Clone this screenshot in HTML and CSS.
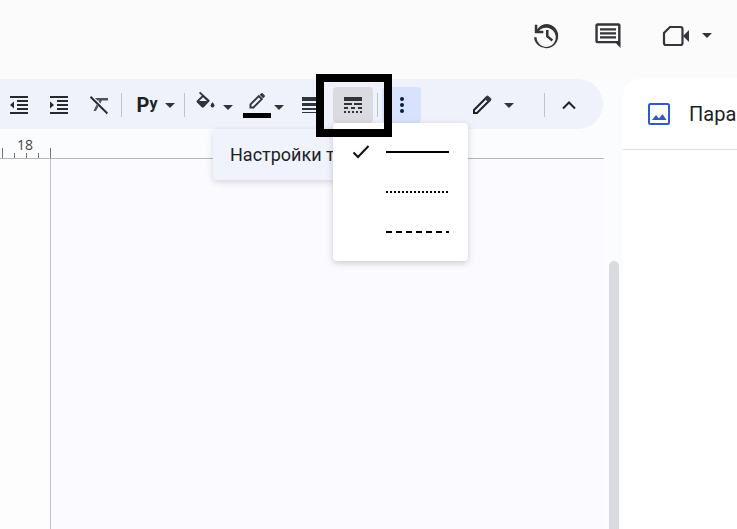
FILE: index.html
```html
<!DOCTYPE html>
<html lang="ru">
<head>
  <meta charset="UTF-8">
  <meta name="viewport" content="width=device-width, initial-scale=1">
  <title>Презентация</title>
  <link rel="stylesheet" href="styles.css">
</head>
<body>
  <header class="header">
    <button class="header-btn" aria-label="История изменений">
      <svg width="32" height="32" viewBox="0 0 24 24" fill="#333538"><path d="M13 3a9 9 0 0 0-7.500 4V3.500H3.600V10H10V8.100H6.800A7.200 7.200 0 1 1 4.900 13H3a9.100 9.100 0 1 0 10-10zM12 7.500v5l4.200 3.600 1.100-1.500-3.400-2.800V7.500z"/></svg>
    </button>
    <button class="header-btn" aria-label="Комментарии">
      <svg width="32" height="32" viewBox="0 0 24 24" fill="#333538"><path d="M21.400 4c0-1-.8-1.500-1.600-1.500H4.200c-1 0-1.700.7-1.700 1.700v11.600c0 1 .7 1.700 1.700 1.700H18l3.400 3.500zM19.600 15.800H4.300V4.300h15.300zM6 12.200h12v1.700H6zM6 9.200h12v1.700H6zM6 6.200h12v1.700H6z"/></svg>
    </button>
    <button class="header-btn meet" aria-label="Видеовстреча">
      <svg width="28" height="24" viewBox="0 0 28 24" fill="none" stroke="#333538" stroke-width="2.200"><path d="M8 3h10.500q2 0 2 2v14q0 2-2 2H4q-2 0-2-2V9z"/><path d="M21 12l6-6v12z" fill="#333538" stroke="none"/></svg>
      <span class="caret"></span>
    </button>
  </header>

  <div class="main">
    <main class="editor">
      <div class="toolbar" role="toolbar">
        <button class="tool" aria-label="Уменьшить отступ">
          <svg width="20" height="20" viewBox="0 0 20 20" fill="#26292d"><path d="M1 1h18v2H1zM8 5h11v2H8zM8 9h11v2H8zM8 13h11v2H8zM1 17h18v2H1zM5 6.500v7L1 10z"/></svg>
        </button>
        <button class="tool" aria-label="Увеличить отступ">
          <svg width="20" height="20" viewBox="0 0 20 20" fill="#26292d"><path d="M1 1h18v2H1zM8 5h11v2H8zM8 9h11v2H8zM8 13h11v2H8zM1 17h18v2H1zM1 6.500v7l4-3.500z"/></svg>
        </button>
        <button class="tool" aria-label="Очистить форматирование">
          <svg width="20" height="20" viewBox="0 0 20 20" fill="#26292d"><path d="M6 3h13v2.400h-6.200l-1.400 3-1.700-1.700.6-1.300H8.400zM7.600 9.600l1.800 1.800L7 16H4.500z" fill="#505357"/><path d="M2.200 1L19 17.800 17.700 19.200.8 2.400z"/></svg>
        </button>
        <span class="separator"></span>
        <button class="tool wide" aria-label="Языковые инструменты">
          <span class="py">P<small>y</small></span>
          <span class="caret"></span>
        </button>
        <span class="separator"></span>
        <button class="tool color" aria-label="Цвет заливки">
          <svg width="22" height="20" viewBox="0 0 22 20" fill="#303338"><path d="M5.200.7L4 2l2.800 2.800L2 9.600c-.6.600-.6 1.300 0 1.900l4.800 4.700c.6.600 1.400.6 2 0l5.500-5.600c.5-.5.5-1.100 0-1.600zM8 6.200l4 3.800H4.200z"/><path d="M17.500 11.300c-1.300 1.600-1.900 2.500-1.900 3.200a1.900 1.900 0 0 0 3.900 0c0-.7-.7-1.600-2-3.200z"/></svg>
          <span class="caret low"></span>
        </button>
        <button class="tool color border-color" aria-label="Цвет рамки">
          <span class="swatch">
            <svg width="18" height="18" viewBox="0 0 18 18" fill="none" stroke="#34373c" stroke-width="2"><path d="M2.500 12.400l8.300-8.300 3 3-8.300 8.300h-3z"/><path d="M11.700 2.700l1.500-1.500q.7-.5 1.400.1l2 2q.6.700.1 1.400l-1.500 1.500z" fill="#34373c" stroke="none"/></svg>
          </span>
          <span class="caret low"></span>
        </button>
        <button class="tool" aria-label="Толщина рамки">
          <svg width="20" height="18" viewBox="0 0 20 18" fill="#303338"><path d="M1 1h18v4H1zM1 7h18v3H1zM1 12h18v2H1zM1 16h18v1H1z"/></svg>
        </button>
        <div class="dash">
          <button class="tool pressed" aria-label="Тип линии" aria-expanded="true">
            <svg width="20" height="18" viewBox="0 0 20 18" fill="#303338"><path d="M1 1h18v4H1zM1 7h8v2H1zM11 7h8v2h-8zM1 11h4v2H1zM8 11h4v2H8zM15 11h4v2h-4zM1 15h2v2H1zM5 15h2v2H5zM9 15h2v2H9zM13 15h2v2h-2zM17 15h2v2h-2z"/></svg>
          </button>
          <div class="tooltip">Настройки т</div>
          <div class="menu" role="menu">
            <button class="menu-item" role="menuitemradio" aria-checked="true" aria-label="Сплошная">
              <svg class="check" width="18" height="16" viewBox="0 0 18 16" fill="none" stroke="#111" stroke-width="2"><path d="M1.500 8.500l4.500 4.500L16.500 2"/></svg>
              <span class="line solid"></span>
            </button>
            <button class="menu-item" role="menuitemradio" aria-checked="false" aria-label="Точки">
              <span class="line dotted"></span>
            </button>
            <button class="menu-item" role="menuitemradio" aria-checked="false" aria-label="Пунктир">
              <span class="line dashed"></span>
            </button>
          </div>
          <div class="highlight"></div>
        </div>
        <span class="separator"></span>
        <button class="tool more" aria-label="Ещё">
          <svg width="6" height="18" viewBox="0 0 6 18" fill="#0c1b3d"><circle cx="3" cy="3" r="2"/><circle cx="3" cy="9" r="2"/><circle cx="3" cy="15" r="2"/></svg>
        </button>
        <div class="toolbar-end">
          <button class="tool mode" aria-label="Режим редактирования">
            <svg width="20" height="20" viewBox="0 0 20 20" fill="none" stroke="#1f2226" stroke-width="2"><path d="M2 15L14 3l3 3L5 18H2z"/><path d="M12.300 3.300l2.500-2.500q.8-.6 1.600.1l2.700 2.700q.6.800 0 1.600l-2.500 2.500z" fill="#34373c" stroke="none"/></svg>
            <span class="caret"></span>
          </button>
          <span class="separator"></span>
          <button class="tool" aria-label="Скрыть меню">
            <svg width="14" height="10" viewBox="0 0 14 10" fill="none" stroke="#202328" stroke-width="2"><path d="M1 8.500l6-6 6 6"/></svg>
          </button>
        </div>
      </div>

      <div class="workspace">
        <div class="canvas">
          <div class="ruler">
            <span class="tick long"></span>
            <span class="tick"></span>
            <span class="tick"><span class="tick-label">18</span></span>
            <span class="tick"></span>
            <span class="tick long"></span>
          </div>
          <div class="slide-area">
            <div class="slide"></div>
          </div>
        </div>
        <div class="scrollbar"></div>
      </div>
    </main>

    <aside class="sidebar">
      <div class="sidebar-header">
        <svg width="24" height="24" viewBox="0 0 24 24" fill="none" stroke="#3159c7" stroke-width="2"><rect x="2" y="2" width="20" height="20" rx="1.500"/><path d="M5 18l4-5 3 3.500L15.500 12l4 6z" fill="#3159c7" stroke="none"/></svg>
        <h2 class="sidebar-title">Пара</h2>
      </div>
    </aside>
  </div>
</body>
</html>
```
FILE: styles.css
```css
* {
  box-sizing: border-box;
}

body {
  margin: 0;
  height: 100vh;
  display: flex;
  flex-direction: column;
  overflow: hidden;
  font-family: Roboto, Arial, sans-serif;
  background-color: #fbfbfb;
  color: #202124;
}

button {
  padding: 0;
  border: none;
  background: none;
  font: inherit;
  color: inherit;
  cursor: pointer;
}

svg {
  display: block;
  flex-shrink: 0;
}

/* Header */
.header {
  display: flex;
  justify-content: flex-end;
  align-items: center;
  gap: 30px;
  height: 79px;
  padding: 0 25px 8px 0;
}

.header-btn {
  display: flex;
  align-items: center;
}

.meet {
  gap: 12px;
  margin-left: 8px;
}

.caret {
  flex-shrink: 0;
  border: 5px solid transparent;
  border-top-color: #333538;
  border-bottom: none;
}

.main {
  flex: 1;
  display: flex;
  min-height: 0;
}

.editor {
  flex: 1;
  min-width: 0;
  display: flex;
  flex-direction: column;
  background-color: #fbfcfe;
}

/* Toolbar */
.toolbar {
  display: flex;
  align-items: center;
  gap: 4px;
  height: 50px;
  margin-right: 20px;
  padding: 2px 16px 0 1px;
  border-radius: 0 25px 25px 0;
  background-color: #eff2fa;
}

.tool {
  display: flex;
  justify-content: center;
  align-items: center;
  flex-shrink: 0;
  width: 36px;
  height: 36px;
  border-radius: 4px;
}

.separator {
  flex-shrink: 0;
  width: 1px;
  height: 24px;
  background-color: #c0c4cc;
}

.wide {
  width: 54px;
  gap: 8px;
  padding-left: 6px;
}

.py {
  font-size: 20px;
  line-height: 24px;
  font-weight: 700;
}

.py small {
  font-size: 16px;
  line-height: 16px;
  vertical-align: 3px;
}

.color {
  width: 48px;
  gap: 6px;
  padding-left: 2px;
}

.color svg {
  margin-bottom: 8px;
}

.low {
  margin-top: 4px;
}

.border-color {
  gap: 3px;
  padding: 0 3px 0 0;
}

.swatch {
  display: flex;
  justify-content: center;
  width: 28px;
  border-bottom: 5px solid #000;
}

.swatch svg {
  margin-bottom: 3px;
}

.pressed {
  width: 40px;
  background-color: #dadbe0;
}

.more {
  width: 39px;
  background-color: #d8e2fc;
}

.toolbar-end {
  display: flex;
  align-items: center;
  gap: 6px;
  margin-left: auto;
}

.mode {
  width: 54px;
  gap: 12px;
  margin-right: 18px;
}

/* Line type menu */
.dash {
  position: relative;
}

.tooltip {
  position: absolute;
  top: 42px;
  right: 0;
  width: 160px;
  height: 51px;
  padding-left: 17px;
  border-radius: 4px;
  background-color: #f0f3fb;
  box-shadow: 0 2px 6px rgba(60, 64, 67, 0.2);
  font-size: 18px;
  line-height: 51px;
  white-space: nowrap;
}

.menu {
  position: absolute;
  top: 36px;
  left: 0;
  width: 135px;
  padding: 9px 0;
  border-radius: 4px;
  background-color: #fff;
  box-shadow: 0 2px 6px rgba(60, 64, 67, 0.25);
}

.menu-item {
  display: flex;
  justify-content: flex-end;
  align-items: center;
  gap: 16px;
  width: 100%;
  height: 40px;
  padding-right: 19px;
}

.line {
  width: 63px;
  height: 2px;
}

.solid {
  background-color: #000;
}

.dotted {
  background: repeating-linear-gradient(to right, #000 0 2px, transparent 2px 4px);
}

.dashed {
  background: repeating-linear-gradient(to right, #000 0 6px, transparent 6px 10px);
}

.highlight {
  position: absolute;
  top: -13px;
  left: -17px;
  width: 76px;
  height: 63px;
  border: 8px solid #000;
  pointer-events: none;
}

/* Ruler and slide */
.workspace {
  flex: 1;
  display: flex;
  gap: 5px;
  padding-right: 4px;
}

.canvas {
  flex: 1;
  display: flex;
  flex-direction: column;
}

.ruler {
  display: flex;
  align-items: flex-end;
  height: 30px;
  padding-left: 2px;
  border-bottom: 1px solid #b4b6ba;
}

.tick {
  position: relative;
  width: 12px;
  height: 5px;
  border-left: 1px solid #777;
}

.long {
  height: 10px;
}

.tick-label {
  position: absolute;
  bottom: 5px;
  left: -11px;
  width: 18px;
  font-family: "Open Sans", Arial, sans-serif;
  font-size: 14px;
  line-height: 16px;
  text-align: center;
  color: #444;
}

.slide-area {
  flex: 1;
  display: flex;
  padding-left: 50px;
  background-color: #fdfdfe;
}

.slide {
  flex: 1;
  border-left: 1px solid #c0c1c6;
  background-color: #fafaff;
}

.scrollbar {
  width: 10px;
  margin-top: 132px;
  border-radius: 5px 5px 0 0;
  background-color: #dadbe0;
}

/* Sidebar */
.sidebar {
  width: 114px;
  overflow: hidden;
  border-radius: 16px 0 0 0;
  background-color: #fff;
}

.sidebar-header {
  display: flex;
  align-items: center;
  gap: 18px;
  height: 71px;
  padding-left: 24px;
  border-bottom: 1px solid #dcdde0;
}

.sidebar-title {
  margin: 0;
  font-size: 20px;
  line-height: 24px;
  font-weight: 400;
}
```
